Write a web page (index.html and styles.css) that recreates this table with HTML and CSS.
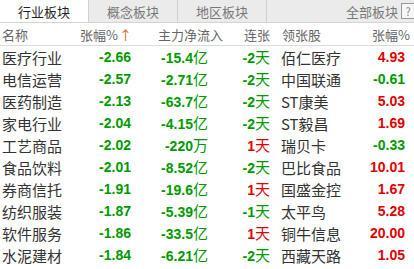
FILE: index.html
```html
<!DOCTYPE html>
<html lang="zh">
<head>
<meta charset="utf-8">
<link rel="stylesheet" href="styles.css">
</head>
<body>
<div class="panel">
  <div class="tabs">
    <div class="tab active">行业板块</div>
    <div class="tab">概念板块</div>
    <div class="tab">地区板块</div>
    <div class="tab-fill">全部板块<span class="help">?</span></div>
  </div>
  <div class="head">
    <div class="c-name">名称</div>
    <div class="c-chg">张幅%<span class="arrow">↑</span></div>
    <div class="c-flow h-flow">主力净流入</div>
    <div class="c-days">连张</div>
    <div class="c-lead">领张股</div>
    <div class="c-pct h-pct">张幅%</div>
  </div>
  <div class="row"><div class="c-name">医疗行业</div><div class="c-chg g">-2.66</div><div class="c-flow g">-15.4<span class="u">亿</span></div><div class="c-days g">-2<span class="u">天</span></div><div class="c-lead">佰仁医疗</div><div class="c-pct r">4.93</div></div>
  <div class="row"><div class="c-name">电信运营</div><div class="c-chg g">-2.57</div><div class="c-flow g">-2.71<span class="u">亿</span></div><div class="c-days g">-2<span class="u">天</span></div><div class="c-lead">中国联通</div><div class="c-pct g">-0.61</div></div>
  <div class="row"><div class="c-name">医药制造</div><div class="c-chg g">-2.13</div><div class="c-flow g">-63.7<span class="u">亿</span></div><div class="c-days g">-2<span class="u">天</span></div><div class="c-lead">ST康美</div><div class="c-pct r">5.03</div></div>
  <div class="row"><div class="c-name">家电行业</div><div class="c-chg g">-2.04</div><div class="c-flow g">-4.15<span class="u">亿</span></div><div class="c-days g">-2<span class="u">天</span></div><div class="c-lead">ST毅昌</div><div class="c-pct r">1.69</div></div>
  <div class="row"><div class="c-name">工艺商品</div><div class="c-chg g">-2.02</div><div class="c-flow g">-220<span class="u">万</span></div><div class="c-days r">1<span class="u">天</span></div><div class="c-lead">瑞贝卡</div><div class="c-pct g">-0.33</div></div>
  <div class="row"><div class="c-name">食品饮料</div><div class="c-chg g">-2.01</div><div class="c-flow g">-8.52<span class="u">亿</span></div><div class="c-days g">-2<span class="u">天</span></div><div class="c-lead">巴比食品</div><div class="c-pct r">10.01</div></div>
  <div class="row"><div class="c-name">券商信托</div><div class="c-chg g">-1.91</div><div class="c-flow g">-19.6<span class="u">亿</span></div><div class="c-days r">1<span class="u">天</span></div><div class="c-lead">国盛金控</div><div class="c-pct r">1.67</div></div>
  <div class="row"><div class="c-name">纺织服装</div><div class="c-chg g">-1.87</div><div class="c-flow g">-5.39<span class="u">亿</span></div><div class="c-days g">-1<span class="u">天</span></div><div class="c-lead">太平鸟</div><div class="c-pct r">5.28</div></div>
  <div class="row"><div class="c-name">软件服务</div><div class="c-chg g">-1.86</div><div class="c-flow g">-33.5<span class="u">亿</span></div><div class="c-days r">1<span class="u">天</span></div><div class="c-lead">铜牛信息</div><div class="c-pct r">20.00</div></div>
  <div class="row"><div class="c-name">水泥建材</div><div class="c-chg g">-1.84</div><div class="c-flow g">-6.21<span class="u">亿</span></div><div class="c-days g">-2<span class="u">天</span></div><div class="c-lead">西藏天路</div><div class="c-pct r">1.05</div></div>
</div>
</body>
</html>
```
FILE: styles.css
```css
html, body {
  margin: 0;
  padding: 0;
  background: #ffffff;
}
body {
  width: 414px;
  height: 269px;
  overflow: hidden;
  font-family: "Noto Sans CJK SC", "DejaVu Sans", sans-serif;
  color: #333;
}
.panel {
  width: 414px;
}
.tabs {
  display: flex;
  height: 22px;
  border-bottom: 1px solid #d4d4d4;
  background: #ebebeb;
}
.tab {
  width: 88px;
  border-right: 1px solid #cfcfcf;
  display: flex;
  align-items: center;
  justify-content: center;
  font-size: 13px;
  color: #777;
  line-height: 1;
}
.tab.active {
  background: #ffffff;
  color: #222;
}
.tab-fill {
  flex: 1;
  display: flex;
  align-items: center;
  justify-content: flex-end;
  font-size: 13px;
  color: #777;
  line-height: 1;
}
.help {
  display: inline-flex;
  align-items: center;
  justify-content: center;
  width: 12px;
  height: 14px;
  margin-left: 3px;
  margin-right: -1px;
  border: 1px solid #999;
  font-size: 11px;
  color: #888;
  background: #f6f6f6;
}
.head, .row {
  display: grid;
  grid-template-columns: 80px 51px 77px 62px 80px 55px;
  align-items: center;
}
.head {
  height: 22px;
  border-bottom: 1px solid #dcdcdc;
  font-size: 13px;
  color: #666;
  line-height: 1;
}
.row {
  height: 22px;
  line-height: 1;
}
.c-name {
  padding-left: 2px;
  font-size: 15px;
  white-space: nowrap;
}
.head .c-name { font-size: 13px; }
.c-chg, .c-flow, .c-days, .c-pct {
  text-align: right;
  white-space: nowrap;
}
.c-lead {
  padding-left: 11px;
  font-size: 15px;
  white-space: nowrap;
}
.head .c-lead { padding-left: 12px; font-size: 13px; }
.h-flow {
  text-align: left;
  padding-left: 27px;
}
.h-pct {
  margin-right: -5px;
}
.arrow {
  color: #e8580c;
  font-size: 13px;
  margin-left: 1px;
}
.g, .r {
  font-family: "Liberation Sans", Arial, sans-serif;
  font-weight: bold;
  font-size: 14px;
}
.g { color: #009a00; }
.r { color: #e00000; }
.u {
  font-family: "Noto Sans CJK SC", sans-serif;
  font-weight: normal;
  font-size: 15px;
}
```
